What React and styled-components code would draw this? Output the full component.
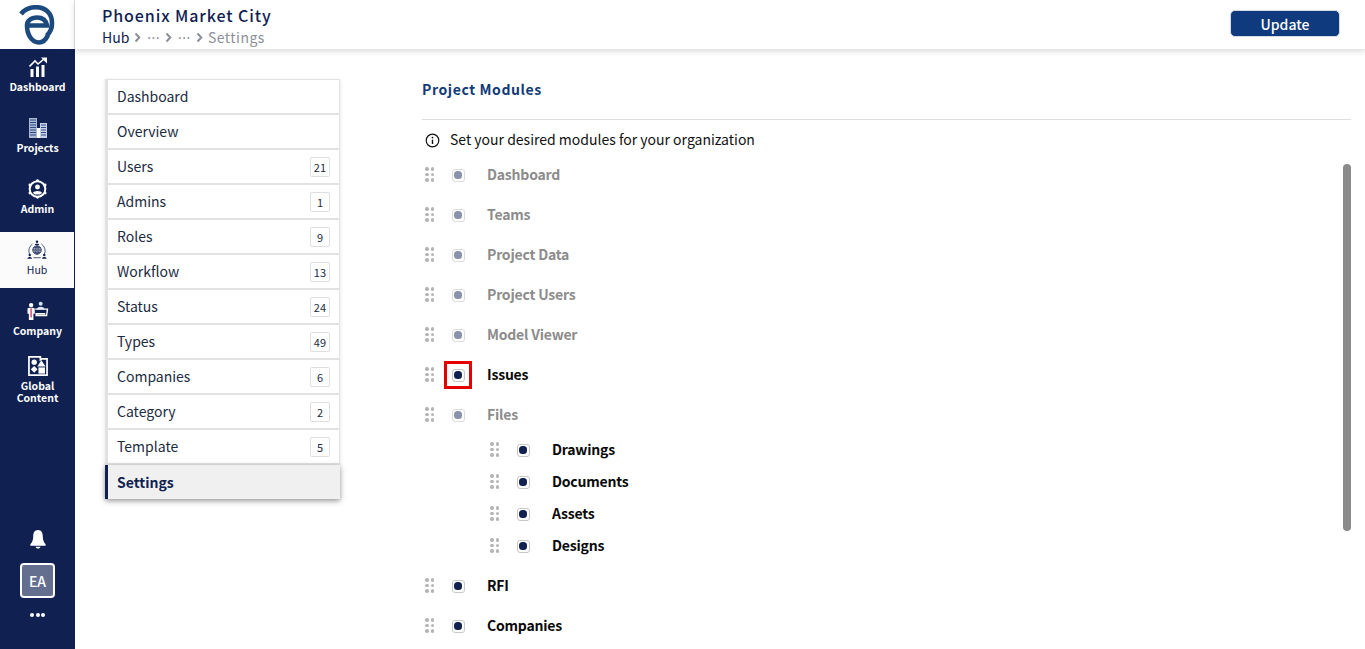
import React from "react";
import styled, { createGlobalStyle } from "styled-components";

const FONT = `"Noto Sans CJK JP", "Noto Sans", sans-serif`;
const NAVY = "#102151";

const Global = createGlobalStyle`
  html, body { margin: 0; padding: 0; height: 100%; overflow: hidden; background: #fff; }
  body { font-family: ${FONT}; }
  * { box-sizing: border-box; }
`;

const Page = styled.div`
  display: flex;
  width: 1365px;
  height: 649px;
  overflow: hidden;
`;

const Sidebar = styled.aside`
  width: 75px;
  flex: none;
  display: flex;
  flex-direction: column;
  background: ${NAVY};
`;

const LogoBox = styled.div`
  height: 49px;
  background: #fff;
  border-right: 1px solid #e4e4e4;
  display: flex;
  align-items: center;
  justify-content: center;
  padding-right: 1px;
`;

const NavList = styled.nav`
  display: flex;
  flex-direction: column;
  gap: 5px;
`;

const NavItem = styled.a`
  height: 56px;
  width: ${(p) => (p.$active ? "74px" : "75px")};
  padding-bottom: 4px;
  display: flex;
  flex-direction: column;
  align-items: center;
  justify-content: center;
  background: ${(p) => (p.$active ? "#fbfbfb" : "transparent")};
  color: ${(p) => (p.$active ? NAVY : "#fff")};
  font-size: 10.5px;
  font-weight: ${(p) => (p.$active ? 400 : 700)};
  line-height: 12px;
  text-align: center;
  svg { display: block; margin-bottom: 4px; }
`;

const SideFooter = styled.div`
  margin-top: auto;
  padding-bottom: 32px;
  display: flex;
  flex-direction: column;
  align-items: center;
`;

const Avatar = styled.div`
  width: 35px;
  height: 35px;
  margin: 13px 0 15px;
  border: 2px solid #fff;
  border-radius: 4px;
  background: #646f8f;
  color: #fff;
  font-size: 14px;
  font-weight: 500;
  display: flex;
  align-items: center;
  justify-content: center;
`;

const Dots = styled.div`
  display: flex;
  gap: 1.5px;
  i { width: 4px; height: 4px; border-radius: 50%; background: #fff; }
`;

const Main = styled.div`
  flex: 1;
  display: flex;
  flex-direction: column;
  min-width: 0;
`;

const Header = styled.header`
  height: 49px;
  flex: none;
  padding: 4px 25px 0 27px;
  display: flex;
  justify-content: space-between;
  background: #fff;
  box-shadow: 0 2px 6px rgba(0, 0, 0, 0.16);
  position: relative;
  z-index: 1;
`;

const Title = styled.div`
  font-size: 16px;
  font-weight: 500;
  line-height: 22px;
  letter-spacing: 0.9px;
  color: ${NAVY};
`;

const Crumbs = styled.div`
  display: flex;
  align-items: center;
  gap: 5px;
  height: 20px;
  margin-top: 1px;
  font-size: 14px;
  color: ${NAVY};
`;

const CrumbDots = styled.span`
  margin-left: 1px;
  font-family: "Noto Sans", sans-serif;
  letter-spacing: 0.5px;
  color: #8b8f99;
`;

const CrumbMuted = styled.span`
  color: #8b8f99;
  letter-spacing: 0.5px;
`;

const UpdateButton = styled.button`
  width: 110px;
  height: 27px;
  margin-top: 6px;
  border: 1px solid #d5dbe6;
  border-radius: 5px;
  background: #0f3a7d;
  color: #fff;
  font-family: ${FONT};
  font-size: 14px;
  font-weight: 500;
  line-height: 1;
`;

const Body = styled.div`
  flex: 1;
  display: flex;
  min-height: 0;
`;

const MenuColumn = styled.div`
  width: 347px;
  flex: none;
  padding: 30px 0 0 30px;
`;

const Menu = styled.div`
  width: 235px;
  display: flex;
  flex-direction: column;
  border-top: 1px solid #e2e2e2;
  border-left: 3px solid #e2e2e2;
  border-right: 1px solid #e2e2e2;
  box-shadow: 0 1px 4px rgba(0, 0, 0, 0.12);
`;

const MenuRow = styled.div`
  height: 35px;
  padding: 0 9px;
  display: flex;
  align-items: center;
  justify-content: space-between;
  border-bottom: 2px solid #e2e2e2;
  background: #fff;
  color: #212b3f;
  font-size: 14px;
`;

const MenuLabel = styled.span`
  margin-bottom: 2px;
`;

const ActiveRow = styled(MenuRow)`
  height: 34px;
  margin-left: -3px;
  margin-right: -1px;
  border-left: 3px solid ${NAVY};
  border-bottom: none;
  background: #f0f0f0;
  color: ${NAVY};
  font-weight: 700;
  box-shadow: 0 2px 6px rgba(0, 0, 0, 0.35);
`;

const Badge = styled.span`
  min-width: 20px;
  height: 20px;
  padding: 0 3px;
  border: 1px solid #dfdfdf;
  border-radius: 2px;
  font-size: 11px;
  color: #212b3f;
  display: flex;
  align-items: center;
  justify-content: center;
`;

const Content = styled.section`
  flex: 1;
  padding: 0 14px 0 0;
  position: relative;
  min-width: 0;
`;

const SectionHead = styled.div`
  height: 71px;
  padding-top: 29px;
  border-bottom: 1px solid #dedede;
  color: #123a78;
  font-size: 14px;
  font-weight: 700;
  line-height: 22px;
  letter-spacing: 0.6px;
`;

const InfoLine = styled.div`
  height: 35px;
  padding: 5px 0 0 3px;
  display: flex;
  align-items: center;
  gap: 10px;
  font-size: 14px;
  color: #111;
  line-height: 20px;
`;

const InfoText = styled.span`
  margin-bottom: 2px;
`;

const ModuleList = styled.div`
  display: flex;
  flex-direction: column;
`;

const ChildGroup = styled.div`
  display: flex;
  flex-direction: column;
  margin-top: -1px;
  padding-bottom: 4px;
`;

const ModuleRow = styled.div`
  height: ${(p) => (p.$child ? "32px" : "40px")};
  margin-left: ${(p) => (p.$child ? "65px" : "0")};
  display: flex;
  align-items: center;
  padding-left: 3px;
`;

const Grip = styled.span`
  width: 9px;
  height: 14px;
  flex: none;
  display: grid;
  grid-template-columns: 3.5px 3.5px;
  grid-auto-rows: 3.5px;
  gap: 2px;
  margin-bottom: 2px;
  i { border-radius: 50%; background: #b5b5b5; }
`;

const CheckCell = styled.span`
  width: 28px;
  height: 28px;
  margin-left: 10px;
  flex: none;
  display: flex;
  align-items: center;
  justify-content: center;
  border: ${(p) => (p.$marked ? "3px solid #e60000" : "none")};
`;

const Check = styled.span`
  width: 13px;
  height: 13px;
  border: 1.5px solid ${(p) => (p.$muted ? "#dcdcdc" : "#c8c8c8")};
  border-radius: 3px;
  background: #fff;
  display: flex;
  align-items: center;
  justify-content: center;
  &::after {
    content: "";
    width: 8px;
    height: 8px;
    border-radius: 3.5px;
    background: ${(p) => (p.$muted ? "#8a92ab" : NAVY)};
  }
`;

const ModuleName = styled.span`
  margin: 0 0 2px 15px;
  font-size: 14px;
  font-weight: 700;
  letter-spacing: -0.2px;
  color: ${(p) => (p.$muted ? "#8c8c8c" : "#0a0a0a")};
`;

const Scrollbar = styled.div`
  position: absolute;
  right: 14px;
  top: 115px;
  width: 8px;
  height: 367px;
  border-radius: 4px;
  background: #8a8a8a;
`;

const Logo = () => (
  <svg width="36" height="40" viewBox="0 0 36 40" fill="none" stroke="#1c4a7e" strokeWidth="4.6">
    <path d="M2 9 C6 4 11 2.2 17 2.2 C27 2.2 33 9 33 18 C33 24 31 28 27.5 30.5" />
    <path d="M8 20.5 H28 C27 15 23 12.5 18 12.5 C12 12.5 8 16 8 20.5 C8 30 13 37.5 20 37.5 C24 37.5 27 34.5 29 30" />
  </svg>
);

const DashboardIcon = () => (
  <svg width="18" height="20" viewBox="0 0 18 20" fill="#fff">
    <rect x="1.5" y="12" width="3" height="8" />
    <rect x="7" y="9.5" width="3" height="10.5" />
    <rect x="12.5" y="8" width="3" height="12" />
    <path d="M0.5 9.5 L6 4 L9 7 L15 2" fill="none" stroke="#fff" strokeWidth="1.6" />
    <path d="M12 0.5 H18 V6.5 Z" />
  </svg>
);

const ProjectsIcon = () => (
  <svg width="18" height="20" viewBox="0 0 18 20">
    <rect x="0" y="0" width="8" height="20" fill="#aeb9d4" />
    <path d="M1 2h6M1 4.5h6M1 7h6M1 9.5h6M1 12h6M1 14.5h6M1 17h6" stroke="#2d4a87" strokeWidth="1" />
    <rect x="8" y="10" width="3" height="10" fill="#fff" />
    <rect x="11" y="5" width="7" height="15" fill="#c9d2e6" />
    <path d="M12 7h5M12 9.5h5M12 12h5M12 14.5h5M12 17h5" stroke="#2d4a87" strokeWidth="1" />
  </svg>
);

const AdminIcon = () => (
  <svg width="21" height="20" viewBox="0 0 22 22">
    <circle cx="11" cy="11" r="8.6" fill="none" stroke="#fff" strokeWidth="2.2" />
    <circle cx="11" cy="1.8" r="1.5" fill="#fff" />
    <circle cx="11" cy="20.2" r="1.5" fill="#fff" />
    <circle cx="2.6" cy="6.5" r="1.5" fill="#fff" />
    <circle cx="19.4" cy="6.5" r="1.5" fill="#fff" />
    <circle cx="2.6" cy="15.5" r="1.5" fill="#fff" />
    <circle cx="19.4" cy="15.5" r="1.5" fill="#fff" />
    <circle cx="11" cy="8.8" r="2.7" fill="#fff" />
    <path d="M6 15.5 C6.5 12.5 15.5 12.5 16 15.5 L13.5 17 H8.5 Z" fill="#fff" />
  </svg>
);

const HubIcon = () => (
  <svg width="20" height="20" viewBox="0 0 22 22" fill="none" stroke={NAVY}>
    <path d="M6 4.5 A9 9 0 0 0 3 16 M16 4.5 A9 9 0 0 1 19 16 M7 19.5 H15" strokeWidth="0.8" />
    <circle cx="11" cy="11" r="4.6" fill="#c9cede" strokeWidth="1" />
    <path d="M6.4 11 H15.6 M11 6.4 V15.6 M7.4 8.5 H14.6 M7.4 13.5 H14.6" strokeWidth="0.7" />
    <ellipse cx="11" cy="11" rx="2.2" ry="4.6" strokeWidth="0.7" />
    <circle cx="11" cy="2" r="1.4" fill={NAVY} stroke="none" />
    <path d="M8.5 5.5 C8.5 3.6 13.5 3.6 13.5 5.5 Z" fill={NAVY} stroke="none" />
    <circle cx="3" cy="16.5" r="1.3" fill={NAVY} stroke="none" />
    <path d="M0.5 20.5 C0.5 18 5.5 18 5.5 20.5 Z" fill={NAVY} stroke="none" />
    <circle cx="19" cy="16.5" r="1.3" fill={NAVY} stroke="none" />
    <path d="M16.5 20.5 C16.5 18 21.5 18 21.5 20.5 Z" fill={NAVY} stroke="none" />
  </svg>
);

const CompanyIcon = () => (
  <svg width="23" height="20" viewBox="0 0 24 22">
    <circle cx="5" cy="4.5" r="2.4" fill="#fff" />
    <path d="M1 8.5 C1 7 9 7 9 8.5 V14 H7.5 V21 H2.5 V14 H1 Z" fill="#fff" />
    <path d="M4 8 H6 L6 17 L5 19 L4 17 Z" fill="#d86a8c" />
    <circle cx="15.5" cy="3" r="2.2" fill="#cfe0f5" />
    <path d="M11.5 9 C11.5 5.5 19.5 5.5 19.5 9 Z" fill="#cfe0f5" />
    <path d="M9.5 9 H23 L22 16 H10.5 V14 H20.5" fill="none" stroke="#fff" strokeWidth="1.5" />
  </svg>
);

const GlobalIcon = () => (
  <svg width="20" height="20" viewBox="0 0 21 21">
    <path d="M1 1 H13 V4 L15 3 H20 V20 H1 Z" fill="none" stroke="#fff" strokeWidth="1.8" />
    <circle cx="6.5" cy="6.5" r="2.8" fill="#fff" />
    <path d="M14 4.5 L18.5 11 H9.8 Z" fill="#fff" />
    <path d="M6.5 10.5 L10 14 L6.5 17.5 L3 14 Z" fill="#fff" />
    <rect x="11" y="12" width="6.8" height="6.5" fill="#fff" />
  </svg>
);

const BellIcon = () => (
  <svg width="18" height="21" viewBox="0 0 18 22" fill="#fff">
    <path d="M9 1 C5.5 1 4 4 4 7.5 C4 11.5 3 13.5 1 16 V17.5 H17 V16 C15 13.5 14 11.5 14 7.5 C14 4 12.5 1 9 1 Z" />
    <path d="M6.5 18.5 H11.5 C11.5 21 6.5 21 6.5 18.5 Z" />
  </svg>
);

const InfoIcon = () => (
  <svg width="15" height="15" viewBox="0 0 15 15" fill="none" stroke="#111">
    <circle cx="7.5" cy="7.5" r="6.3" strokeWidth="1.2" />
    <path d="M7.5 6.7 V11" strokeWidth="1.4" />
    <circle cx="7.5" cy="4.6" r="0.9" fill="#111" stroke="none" />
  </svg>
);

const Chevron = () => (
  <svg width="7" height="11" viewBox="0 0 7 11" fill="none" stroke="#8b8f99" strokeWidth="2">
    <path d="M1.5 1.5 L5.3 5.5 L1.5 9.5" />
  </svg>
);

const navItems = [
  { label: "Dashboard", icon: <DashboardIcon /> },
  { label: "Projects", icon: <ProjectsIcon /> },
  { label: "Admin", icon: <AdminIcon /> },
  { label: "Hub", icon: <HubIcon />, active: true },
  { label: "Company", icon: <CompanyIcon /> },
  { label: "Global Content", icon: <GlobalIcon /> },
];

const menu = [
  ["Dashboard"],
  ["Overview"],
  ["Users", 21],
  ["Admins", 1],
  ["Roles", 9],
  ["Workflow", 13],
  ["Status", 24],
  ["Types", 49],
  ["Companies", 6],
  ["Category", 2],
  ["Template", 5],
];

const modules = [
  { name: "Dashboard", muted: true },
  { name: "Teams", muted: true },
  { name: "Project Data", muted: true },
  { name: "Project Users", muted: true },
  { name: "Model Viewer", muted: true },
  { name: "Issues", marked: true },
  { name: "Files", muted: true, children: ["Drawings", "Documents", "Assets", "Designs"] },
  { name: "RFI" },
  { name: "Companies" },
];

const Module = ({ name, muted, marked, child }) => (
  <ModuleRow $child={child}>
    <Grip>
      {Array.from({ length: 6 }, (_, i) => (
        <i key={i} />
      ))}
    </Grip>
    <CheckCell $marked={marked}>
      <Check $muted={muted} />
    </CheckCell>
    <ModuleName $muted={muted}>{name}</ModuleName>
  </ModuleRow>
);

export default function App() {
  return (
    <Page>
      <Global />
      <Sidebar>
        <LogoBox>
          <Logo />
        </LogoBox>
        <NavList>
          {navItems.map((n) => (
            <NavItem key={n.label} $active={n.active}>
              {n.icon}
              <span>{n.label}</span>
            </NavItem>
          ))}
        </NavList>
        <SideFooter>
          <BellIcon />
          <Avatar>EA</Avatar>
          <Dots>
            <i />
            <i />
            <i />
          </Dots>
        </SideFooter>
      </Sidebar>
      <Main>
        <Header>
          <div>
            <Title>Phoenix Market City</Title>
            <Crumbs>
              <span>Hub</span>
              <Chevron />
              <CrumbDots>···</CrumbDots>
              <Chevron />
              <CrumbDots>···</CrumbDots>
              <Chevron />
              <CrumbMuted>Settings</CrumbMuted>
            </Crumbs>
          </div>
          <UpdateButton>Update</UpdateButton>
        </Header>
        <Body>
          <MenuColumn>
            <Menu>
              {menu.map(([label, count]) => (
                <MenuRow key={label}>
                  <MenuLabel>{label}</MenuLabel>
                  {count !== undefined && <Badge>{count}</Badge>}
                </MenuRow>
              ))}
              <ActiveRow>
                <span>Settings</span>
              </ActiveRow>
            </Menu>
          </MenuColumn>
          <Content>
            <SectionHead>Project Modules</SectionHead>
            <InfoLine>
              <InfoIcon />
              <InfoText>Set your desired modules for your organization</InfoText>
            </InfoLine>
            <ModuleList>
              {modules.map((m) => (
                <React.Fragment key={m.name}>
                  <Module name={m.name} muted={m.muted} marked={m.marked} />
                  {m.children && (
                    <ChildGroup>
                      {m.children.map((c) => (
                        <Module key={c} name={c} child />
                      ))}
                    </ChildGroup>
                  )}
                </React.Fragment>
              ))}
            </ModuleList>
            <Scrollbar />
          </Content>
        </Body>
      </Main>
    </Page>
  );
}
